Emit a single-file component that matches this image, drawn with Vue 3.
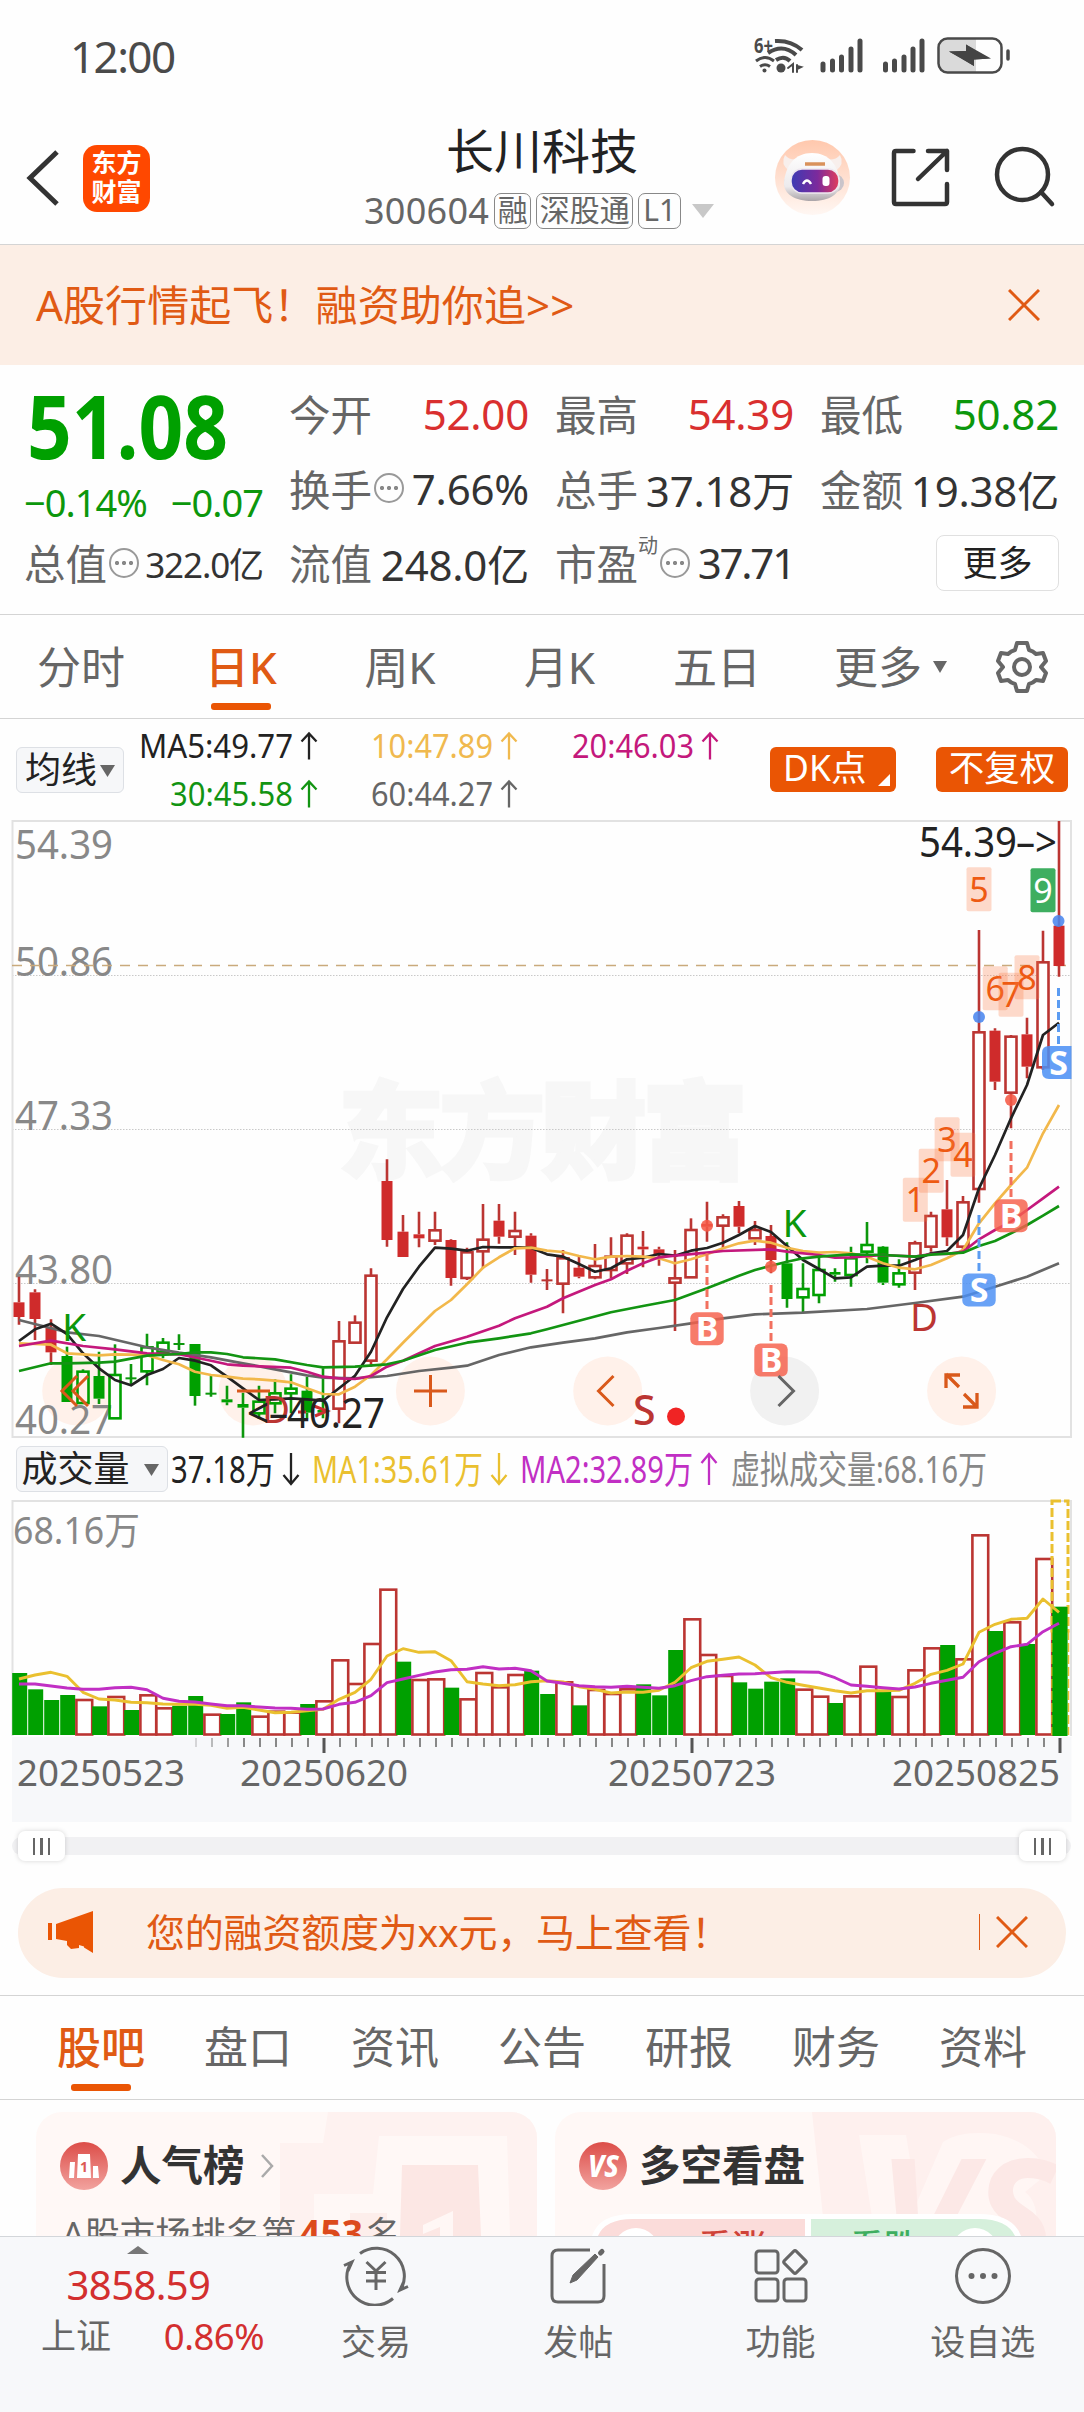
<script setup>
const X0 = 19
const STEP = 16
const cx = (i) => X0 + STEP * i
const ky = (v) => 1120 + v / 3
const vy = (v) => 1490 + v / 3

// kind (upper case = solid body), high, body top, body bottom, low
const candles = [
  ['R', 470, 547, 591, 614], ['R', 508, 517, 597, 660], ['R', 598, 622, 697, 735], ['G', 680, 708, 846, 846],
  ['g', 748, 755, 849, 849], ['G', 695, 768, 836, 852], ['g', 673, 765, 895, 895], ['d', 732, 775, 775, 792],
  ['g', 641, 682, 754, 796], ['g', 654, 668, 697, 715], ['d', 643, 672, 672, 690], ['G', 672, 672, 828, 857],
  ['d', 768, 821, 821, 830], ['G', 797, 838, 847, 856], ['G', 818, 852, 863, 953], ['g', 797, 845, 880, 897],
  ['g', 778, 820, 850, 880], ['g', 763, 806, 820, 880], ['G', 770, 812, 878, 895], ['G', 745, 870, 878, 895],
  ['r', 603, 664, 866, 910], ['r', 586, 608, 668, 668], ['r', 445, 467, 722, 740], ['R', 118, 183, 360, 380],
  ['R', 285, 335, 411, 411], ['R', 275, 343, 355, 382], ['r', 275, 331, 362, 375], ['R', 358, 360, 474, 497],
  ['r', 383, 397, 474, 480], ['r', 252, 359, 394, 445], ['R', 252, 302, 350, 371], ['r', 275, 333, 350, 405],
  ['R', 340, 347, 464, 488], ['c', 447, 481, 481, 510], ['r', 390, 415, 491, 580], ['R', 410, 443, 470, 475],
  ['r', 372, 438, 472, 478], ['r', 352, 410, 450, 475], ['r', 340, 347, 430, 462], ['R', 333, 380, 388, 442],
  ['R', 380, 388, 402, 437], ['r', 390, 475, 488, 633], ['r', 295, 330, 472, 472], ['R', 245, 312, 320, 365],
  ['r', 283, 292, 317, 385], ['R', 243, 258, 320, 340], ['r', 303, 330, 355, 375], ['R', 315, 348, 420, 460],
  ['G', 367, 430, 537, 563], ['g', 430, 507, 532, 577], ['g', 410, 450, 525, 550], ['G', 445, 456, 464, 485],
  ['g', 380, 415, 465, 500], ['g', 306, 375, 395, 430], ['G', 378, 380, 488, 495], ['g', 418, 460, 493, 503],
  ['r', 362, 370, 458, 510], ['r', 275, 288, 380, 395], ['R', 180, 268, 352, 378], ['r', 228, 247, 380, 390],
  ['r', -570, -263, 207, 248], ['R', -275, -268, -115, -90], ['r', -255, -250, -82, 25], ['R', -307, -257, -160, -125],
  ['r', -568, -473, -158, -150], ['R', -897, -583, -462, -430],
].map(([k, h, t, b, l], i) => {
  const red = k === 'R' || k === 'r' || k === 'c'
  return { x: cx(i), solid: k === 'R' || k === 'G', h: ky(h), t: ky(t), b: ky(b), l: ky(l), fill: i < 20 ? 'none' : '#fff', color: red ? (k === 'R' ? '#cf2b2b' : '#bb3532') : '#00a000', wick: red ? '#bb3532' : '#0c970c' }
})

const toPoints = (pairs, fy) => pairs.map(([i, v]) => `${cx(i)},${fy(v).toFixed(1)}`).join(' ')
const seq = (arr) => arr.map((v, i) => [i, v])

const maLines = [
  { color: '#666', p: [[0, 600], [3, 637], [5, 648], [8, 682], [10, 698], [12, 712], [14, 730], [16, 748], [18, 766], [19, 773], [21, 775], [23, 768], [25, 753], [27, 743], [28, 737], [30, 705], [32, 682], [34, 668], [36, 655], [38, 637], [40, 624], [42, 610], [44, 595], [46, 583], [49, 578], [53, 567], [56, 549], [59, 530], [60, 515], [61, 500], [63, 470], [65, 430]] },
  { color: '#222', p: seq([663, 628, 611, 642, 700, 745, 780, 796, 765, 747, 714, 722, 736, 770, 805, 840, 838, 835, 838, 842, 805, 767, 695, 592, 507, 440, 383, 386, 392, 381, 382, 382, 383, 403, 410, 432, 455, 445, 418, 413, 402, 407, 392, 384, 368, 345, 318, 336, 378, 420, 447, 475, 472, 440, 437, 437, 420, 400, 393, 345, 205, 105, -5, -105, -255, -292]) },
  { color: '#f2b84b', p: seq([670, 672, 674, 700, 703, 706, 703, 704, 706, 720, 733, 755, 765, 770, 776, 778, 782, 787, 805, 822, 823, 800, 765, 718, 668, 620, 573, 540, 493, 443, 412, 385, 383, 392, 396, 408, 418, 410, 408, 410, 415, 430, 418, 403, 385, 370, 362, 368, 383, 393, 398, 396, 400, 410, 430, 443, 448, 435, 415, 390, 310, 250, 195, 143, 40, -45]) },
  { color: '#c4187c', p: seq([[0, 678], [2, 662], [4, 678], [6, 688], [8, 700], [10, 703], [12, 722], [13, 733], [14, 737], [17, 743], [18, 755], [19, 770], [20, 775], [21, 777], [22, 768], [23, 740], [24, 722], [26, 678], [28, 650], [30, 617], [31, 595], [33, 560], [34, 535], [36, 495], [37, 478], [38, 452], [39, 430], [40, 412], [41, 407], [43, 398], [44, 393], [47, 388], [48, 395], [50, 405], [51, 413], [52, 412], [54, 405], [56, 410], [57, 402], [58, 402], [59, 395], [60, 358], [61, 330], [62, 305], [63, 270], [64, 235], [65, 200]]).map((e) => e[1]) },
  { color: '#129412', p: [[0, 753], [2, 730], [3, 730], [5, 728], [6, 725], [8, 707], [10, 702], [11, 697], [12, 697], [13, 702], [14, 712], [16, 718], [18, 735], [19, 742], [21, 740], [23, 733], [24, 722], [26, 690], [28, 668], [30, 655], [32, 640], [33, 628], [35, 602], [37, 577], [39, 558], [41, 540], [43, 505], [45, 467], [46, 450], [47, 437], [48, 425], [49, 415], [50, 410], [52, 403], [54, 405], [56, 410], [57, 404], [59, 398], [60, 378], [61, 363], [62, 340], [63, 315], [64, 287], [65, 258]] },
].map((l) => ({ color: l.color, points: toPoints(l.p, ky) }))

const redVol = new Set([4, 6, 8, 9, 12, 15, 16, 17, 19, 20, 21, 22, 23, 25, 26, 28, 29, 30, 31, 34, 36, 37, 38, 42, 43, 44, 49, 50, 52, 53, 55, 56, 57, 59, 60, 62, 64])
const volumes = [552, 601, 633, 618, 630, 652, 621, 663, 616, 655, 650, 621, 674, 675, 640, 680, 665, 668, 645, 634, 511, 582, 462, 299, 518, 570, 568, 596, 628, 549, 592, 555, 545, 615, 577, 649, 600, 612, 598, 586, 619, 483, 388, 495, 558, 580, 599, 578, 568, 599, 620, 642, 619, 530, 607, 621, 541, 475, 468, 508, 136, 426, 397, 465, 207, 353]
  .map((v, i) => ({ x: cx(i), y: vy(v), red: redVol.has(i) }))
const volLines = [
  { color: '#eac02f', p: seq([567, 555, 547, 559, 607, 627, 630, 637, 638, 642, 643, 643, 646, 655, 652, 660, 668, 667, 662, 658, 628, 607, 568, 498, 476, 487, 485, 512, 575, 582, 587, 584, 575, 572, 576, 590, 598, 609, 606, 607, 601, 577, 533, 514, 508, 501, 525, 563, 577, 586, 594, 602, 609, 602, 602, 601, 580, 553, 541, 522, 427, 403, 388, 385, 327, 367]) },
  { color: '#c12fc4', p: seq([582, 582, 588, 594, 598, 598, 593, 592, 599, 625, 634, 636, 642, 647, 647, 651, 654, 655, 658, 657, 643, 637, 617, 578, 567, 556, 546, 539, 538, 530, 537, 535, 542, 573, 580, 587, 590, 592, 589, 592, 595, 587, 572, 560, 556, 552, 551, 548, 545, 546, 547, 563, 585, 589, 593, 597, 591, 580, 571, 562, 515, 490, 470, 463, 425, 400]) },
].map((l) => ({ color: l.color, points: toPoints(l.p, vy) }))

const ticks = Array.from({ length: 55 }, (_, k) => {
  const i = k + 11
  const major = i === 19 || i === 42 || i === 65
  return { x: cx(i) + 1, major, o: k < 3 ? 0.3 + k * 0.25 : 1 }
})

const prices = [
  { y: 859, t: '54.39' }, { y: 975.5, t: '50.86' }, { y: 1130, t: '47.33' }, { y: 1284, t: '43.80' }, { y: 1434, t: '40.27' },
]
const counts = [
  { n: 1, x: 915.3, y: 1199.7 }, { n: 2, x: 931.2, y: 1170.7 }, { n: 3, x: 947.1, y: 1139.3 }, { n: 4, x: 963, y: 1154.7 },
  { n: 5, x: 979, y: 889.3 }, { n: 6, x: 995.2, y: 988.3 }, { n: 7, x: 1011, y: 994.7 }, { n: 8, x: 1027, y: 977.3 }, { n: 9, x: 1043, y: 890.3 },
]
const signals = [
  { t: 'B', x: 707, y: 1328.7, from: 1253, to: 1310, dot: 1225.7 },
  { t: 'B', x: 771, y: 1360, from: 1285, to: 1341, dot: 1266.7 },
  { t: 'B', x: 1011, y: 1215.7, from: 1141, to: 1197, dot: 1100 },
  { t: 'S', x: 979, y: 1290, from: 1215, to: 1271, dot: 1017 },
  { t: 'S', x: 1058.5, y: 1062.7, from: 988, to: 1044, dot: 921 },
]
const maHead = [
  { t: 'MA5:49.77', x: 139, w: 154, y: 757.5, c: '#222' },
  { t: '10:47.89', x: 371, w: 122, y: 757.5, c: '#f0b94e' },
  { t: '20:46.03', x: 572, w: 122, y: 757.5, c: '#c4187c' },
  { t: '30:45.58', x: 170, w: 123, y: 805.5, c: '#129412' },
  { t: '60:44.27', x: 371, w: 122, y: 805.5, c: '#666' },
]
const volHead = [
  { t: '37.18万', x: 171, w: 104, c: '#222', a: 'down' },
  { t: 'MA1:35.61万', x: 312, w: 171, c: '#eac02f', a: 'down' },
  { t: 'MA2:32.89万', x: 520, w: 173, c: '#c12fc4', a: 'up' },
  { t: '虚拟成交量:68.16万', x: 731, w: 256, c: '#888' },
]
const dates = [{ t: '20250523', x: 17 }, { t: '20250620', x: 240 }, { t: '20250723', x: 608 }, { t: '20250825', x: 892 }]
const infoTabs = ['股吧', '盘口', '资讯', '公告', '研报', '财务', '资料']
</script>

<template>
  <div class="page">
    <div class="status">
      <span class="clock">12:00</span>
      <svg width="274" height="48" viewBox="750 30 274 48" fill="none" stroke="#4a4a4a" stroke-linecap="round">
        <text x="754" y="53" font-size="21" font-weight="700" fill="#4a4a4a" stroke="none" textLength="19" lengthAdjust="spacingAndGlyphs">6+</text>
        <g stroke-width="4" stroke-linecap="butt">
          <path d="M775 41Q791 40 802 50M768 53Q783 43 796 55M776 60Q784 55 790 61" />
          <path d="M756 61Q765 54 774 61M760 66.500Q765 63 770 66.500" stroke-width="3" />
        </g>
        <circle cx="764.500" cy="70.500" r="2" fill="#4a4a4a" stroke="none" />
        <circle cx="781" cy="68" r="4.500" fill="#4a4a4a" stroke="none" />
        <path d="M788 68l5-4v8M797 65v7M797 66l4 1-4 2" stroke-width="2" />
        <path d="M823 64v6M832.500 61v9M841.500 57v13M851 49v21M860 41v29M885.500 64v6M894.500 61v9M904 57v13M913 49v21M922 41v29" stroke-width="5" />
        <path d="M949 39h27v33h-27q-10 0-10-10V49q0-10 10-10z" fill="#dadada" stroke="none" />
        <rect x="938.500" y="38.500" width="63" height="34" rx="9" stroke-width="2.500" />
        <path d="M949 51.500l17-.5V44.500L973 49v8L991 58.500 974 59.500v6.500L961 58z" fill="#444" stroke="none" />
        <path d="M966 44.500L991 58.500 974 59.500v6.500L949 51.500l17-.5z" fill="#444" stroke="none" />
        <path d="M1008 51v8" stroke-width="3.500" />
      </svg>
    </div>

    <header class="head">
      <div class="head-left">
        <svg width="34" height="56" viewBox="0 0 34 56"><path d="M32 2L5 28l27 26" fill="none" stroke="#333" stroke-width="5" /></svg>
        <div class="logo"><span>东方</span><span>财富</span></div>
      </div>
      <div class="head-mid">
        <h1>长川科技</h1>
        <div class="code">
          <span class="num">300604</span><i>融</i><i>深股通</i><i class="l1">L1</i>
          <svg width="22" height="14" viewBox="0 0 22 14"><path d="M0 0h22L11 14z" fill="#c8c8c8" /></svg>
        </div>
      </div>
      <svg class="head-right" width="290" height="80" viewBox="770 137 290 80" fill="none">
        <defs>
          <linearGradient id="halo" x2="0" y2="1"><stop stop-color="#ffc8ad" /><stop offset="1" stop-color="#fff7f3" /></linearGradient>
          <linearGradient id="visor"><stop stop-color="#3c3bb4" /><stop offset=".55" stop-color="#7c2a9c" /><stop offset="1" stop-color="#e23c5c" /></linearGradient>
          <linearGradient id="helm" x2="0" y2="1"><stop stop-color="#fff" /><stop offset=".7" stop-color="#eceaec" /><stop offset="1" stop-color="#aaa4a8" /></linearGradient>
        </defs>
        <circle cx="812.500" cy="177.500" r="37.500" fill="url(#halo)" />
        <path d="M785 155q-5 9 4 16l10-12q-9 2-14-4zM840 155q5 9-4 16l-10-12q9 2 14-4z" fill="#f8efec" />
        <rect x="784" y="174" width="60" height="18" rx="9" fill="#c9c4ca" />
        <path d="M812 153c17 0 26 12 28 29 1 12-11 19-28 19s-29-7-28-19c2-17 11-29 28-29z" fill="url(#helm)" />
        <rect x="791" y="169" width="48" height="24" rx="11" fill="url(#visor)" stroke="#eee7ef" stroke-width="1.500" />
        <path d="M803 184q4-7 8 0" stroke="#fff" stroke-width="2.500" />
        <rect x="822.500" y="176" width="7" height="10" rx="3" fill="#fff" />
        <path d="M805 164h20" stroke="#d9925b" stroke-width="3.500" />
        <path d="M913.500 151H896q-2 0-2 2v49q0 2 2 2h49q2 0 2-2v-18M928 151h19v19M947 151l-29 28" stroke="#333" stroke-width="4.500" stroke-linecap="round" stroke-linejoin="round" />
        <circle cx="1022.500" cy="174.500" r="25.500" stroke="#333" stroke-width="4.500" />
        <path d="M1041 192l11 12" stroke="#333" stroke-width="4.500" stroke-linecap="round" />
      </svg>
    </header>

    <div class="promo">
      <span>A股行情起飞！融资助你追&gt;&gt;</span>
      <svg width="32" height="32" viewBox="0 0 32 32"><path d="M1 1l30 30M31 1L1 31" stroke="#e05a14" stroke-width="3" /></svg>
    </div>

    <section class="quote">
      <div class="last">
        <strong>51.08</strong>
        <p><span>−0.14%</span><span>−0.07</span></p>
      </div>
      <div class="cell"><label>今开</label><b class="up">52.00</b></div>
      <div class="cell"><label>最高</label><b class="up">54.39</b></div>
      <div class="cell"><label>最低</label><b class="dn">50.82</b></div>
      <div class="cell"><label>换手</label><em class="dots"></em><b>7.66%</b></div>
      <div class="cell"><label>总手</label><b>37.18万</b></div>
      <div class="cell"><label>金额</label><b>19.38亿</b></div>
      <div class="cell"><label>总值</label><em class="dots"></em><b class="small">322.0亿</b></div>
      <div class="cell"><label>流值</label><b>248.0亿</b></div>
      <div class="cell"><label>市盈</label><sup>动</sup><em class="dots"></em><b class="tight">37.71</b></div>
      <div class="cell end"><button>更多</button></div>
    </section>

    <nav class="periods">
      <span>分时</span><span class="on">日K</span><span>周K</span><span>月K</span><span>五日</span>
      <span class="more">更多<svg width="14" height="12" viewBox="0 0 14 12"><path d="M0 0h14L7 12z" fill="#666" /></svg></span>
      <svg class="gear" width="52" height="54" viewBox="-26 -27 52 54" fill="none" stroke="#666" stroke-width="4" stroke-linejoin="round">
        <path d="M-5-24H5L7-17Q11-16 14-13L21-14 24-6 19 0 24 6 21 14 14 13Q11 16 7 17L5 24H-5L-7 17Q-11 16-14 13L-21 14-24 6-19 0-24-6-21-14-14-13Q-11-16-7-17Z" />
        <circle r="8" />
      </svg>
    </nav>

    <div class="ma-head">
      <div class="pill">均线<svg width="15" height="12" viewBox="0 0 15 12"><path d="M0 0h15L7.500 12z" fill="#666" /></svg></div>
      <svg width="600" height="92" viewBox="136 724 600 92">
        <g v-for="m in maHead" :key="m.t" :fill="m.c">
          <text :x="m.x" :y="m.y" font-size="33" :textLength="m.w" lengthAdjust="spacingAndGlyphs">{{ m.t }}</text>
          <path :d="`M${m.x + m.w + 16} ${m.y + 2}v-26m-7.500 8l7.500-8 7.500 8`" fill="none" :stroke="m.c" stroke-width="2.300" />
        </g>
      </svg>
      <div class="tag dk">DK点<u></u></div>
      <div class="tag fq">不复权</div>
    </div>

    <svg class="chart" width="1084" height="622" viewBox="0 818 1084 622">
      <text x="338" y="1170" font-size="106" font-weight="900" fill="#f7f7f7" stroke="#f7f7f7" stroke-width="3" textLength="410">东方财富</text>
      <g stroke="#c9c9c9" stroke-width="1.200" stroke-dasharray="1.500 1.500"><path d="M12 975.500H1071M12 1129.500H1071M12 1283.500H1071" /></g>
      <rect x="12.500" y="821" width="1058.500" height="616" fill="none" stroke="#e2e2e2" stroke-width="2" />
      <g>
        <circle v-for="x in [76.7, 253, 430.4, 607.7, 961.6]" :key="x" :cx="x" cy="1391" r="34.500" fill="#fff1ea" />
        <circle cx="784.600" cy="1391" r="34.500" fill="#f1f1f1" />
      </g>
      <text v-for="p in prices" :key="p.t" x="15" :y="p.y" font-size="40" fill="#888" textLength="98" lengthAdjust="spacingAndGlyphs">{{ p.t }}</text>
      <path d="M12 965.500H1066" stroke="#c9aa7c" stroke-width="1.300" stroke-dasharray="10 8" />

      <g v-for="c in candles" :key="c.x">
        <path :d="`M${c.x} ${c.h}V${c.t}M${c.x} ${c.b}V${c.l}`" :stroke="c.wick" stroke-width="2.600" />
        <rect v-if="c.solid" :x="c.x - 5.500" :y="c.t" width="11" :height="Math.max(c.b - c.t, 2)" :fill="c.color" />
        <path v-else-if="c.t === c.b" :d="`M${c.x - 5.500} ${c.t}h11`" :stroke="c.wick" stroke-width="2" />
        <rect v-else :x="c.x - 5.500" :y="c.t" width="11" :height="c.b - c.t" :fill="c.fill" :stroke="c.color" stroke-width="2.600" />
      </g>

      <polyline v-for="l in maLines" :key="l.color" :points="l.points" fill="none" :stroke="l.color" stroke-width="2.700" stroke-linejoin="round" />

      <g v-for="s in signals" :key="s.x">
        <path :d="`M${s.x} ${s.from}V${s.to}`" :stroke="s.t === 'B' ? '#f2705f' : '#5b9cf2'" stroke-width="3" stroke-dasharray="8 4" />
        <circle :cx="s.x" :cy="s.dot" r="6" :fill="s.t === 'B' ? '#f55a45' : '#4a86ee'" fill-opacity=".88" />
        <path v-if="s.x > 1050" d="M1049 1046H1071.500V1079H1049Q1042 1079 1042 1072V1053Q1042 1046 1049 1046Z" fill="#4a8ff4" fill-opacity=".86" />
        <rect v-else :x="s.x - 16.700" :y="s.y - 16.500" width="33.400" height="33" rx="6" :fill="s.t === 'B' ? '#f5604c' : '#4a8ff4'" fill-opacity=".83" />
        <text :x="s.x" :y="s.y + 12" font-size="34" font-weight="700" fill="#fff" text-anchor="middle">{{ s.t }}</text>
      </g>

      <g v-for="n in counts" :key="n.n" font-size="34" text-anchor="middle">
        <rect :x="n.x - 12.500" :y="n.y - 22" width="25" height="44" rx="2" :fill="n.n === 9 ? '#3eae60' : '#fb7a46'" :fill-opacity="n.n === 9 ? 1 : 0.28" />
        <text :x="n.x" :y="n.y + 12.500" :fill="n.n === 9 ? '#fff' : '#ee5a12'">{{ n.n }}</text>
      </g>

      <text x="919" y="857" font-size="41" fill="#222" textLength="98" lengthAdjust="spacingAndGlyphs">54.39</text>
      <text x="1016" y="857" font-size="41" fill="#222" textLength="41" lengthAdjust="spacingAndGlyphs">–&gt;</text>
      <g font-size="39">
        <text x="62" y="1340.500" fill="#0c970c">K</text>
        <text x="782.500" y="1236.500" fill="#0c970c">K</text>
        <text x="910" y="1331" fill="#bb3532" textLength="28" lengthAdjust="spacingAndGlyphs">D</text>
        <text x="262" y="1423" fill="#bb3532" textLength="28" lengthAdjust="spacingAndGlyphs">D</text>
        <text x="633" y="1425" font-size="41" font-weight="500" fill="#bb3532">S</text>
      </g>
      <circle cx="676" cy="1416.500" r="9" fill="#f02424" />
      <path d="M298 1412h8M314 1406l13 5-12 5" fill="none" stroke="#cc3030" stroke-width="3" />
      <text x="247" y="1428" font-size="41" fill="#222" textLength="41" lengthAdjust="spacingAndGlyphs">&lt;–</text>
      <text x="287" y="1428" font-size="41" fill="#222" textLength="98" lengthAdjust="spacingAndGlyphs">40.27</text>

      <g fill="none" stroke="#d9591b" stroke-width="3">
        <path d="M77 1376l-15 15 15 15M88 1376l-15 15 15 15M237 1391h33M414 1391h33M430.500 1375v32M613.500 1376l-15 15 15 15" />
        <path d="M959 1387l-13-13M946 1388v-13h14M964 1394l13 13M977 1393v14h-14" stroke-width="3.300" />
        <path d="M778.500 1376l15 15-15 15" stroke="#666" />
      </g>
    </svg>

    <div class="vol-head">
      <div class="pill wide">成交量<svg width="15" height="12" viewBox="0 0 15 12"><path d="M0 0h15L7.500 12z" fill="#666" /></svg></div>
      <svg width="840" height="56" viewBox="168 1442 840 56">
        <g v-for="m in volHead" :key="m.t">
          <text :x="m.x" y="1482.500" font-size="38" :fill="m.c" :textLength="m.w" lengthAdjust="spacingAndGlyphs">{{ m.t }}</text>
          <path v-if="m.a === 'down'" :d="`M${m.x + m.w + 16} 1453v31m-7.500-9l7.500 9 7.500-9`" fill="none" :stroke="m.c" stroke-width="2.300" />
          <path v-if="m.a === 'up'" :d="`M${m.x + m.w + 16} 1485v-31m-7.500 9l7.500-9 7.500 9`" fill="none" :stroke="m.c" stroke-width="2.300" />
        </g>
      </svg>
    </div>

    <svg class="chart" width="1084" height="324" viewBox="0 1498 1084 324">
      <path d="M12.500 1736V1501H1071V1736" fill="none" stroke="#e2e2e2" stroke-width="2" />
      <rect x="12" y="1737" width="1059.500" height="85" fill="#f7f8fa" />
      <text x="13" y="1544" font-size="38" fill="#888" textLength="127" lengthAdjust="spacingAndGlyphs">68.16万</text>
      <template v-for="v in volumes" :key="v.x">
        <rect v-if="v.red" :x="v.x - 6.600" :y="v.y" width="15.800" :height="1734.500 - v.y" fill="#fff" stroke="#bb3532" stroke-width="2.600" />
        <rect v-else :x="v.x - 6.800" :y="v.y - 1" width="15" :height="1736 - v.y" fill="#00a000" />
      </template>
      <rect x="1052" y="1501" width="16" height="130" fill="none" stroke="#eac02f" stroke-width="3" stroke-dasharray="9 3" />
      <path d="M1052 1631v104M1068.500 1631v104" stroke="#eac02f" stroke-width="1.500" stroke-dasharray="9 3" />
      <rect x="1052.500" y="1607" width="15" height="129" fill="#00a000" />
      <polyline v-for="l in volLines" :key="l.color" :points="l.points" fill="none" :stroke="l.color" stroke-width="2.900" stroke-linejoin="round" />
      <path v-for="t in ticks" :key="t.x" :d="`M${t.x} 1738v${t.major ? 15 : 9}`" :stroke="t.major ? '#555' : '#888'" :stroke-width="t.major ? 3 : 2" :opacity="t.o" />
      <text v-for="d in dates" :key="d.t" :x="d.x" y="1786" font-size="37" fill="#666" textLength="168" lengthAdjust="spacingAndGlyphs">{{ d.t }}</text>
    </svg>

    <div class="slider">
      <div class="knob"><i></i><i></i><i></i></div>
      <div class="knob"><i></i><i></i><i></i></div>
    </div>

    <div class="notice">
      <svg width="48" height="42" viewBox="0 0 48 42" fill="#ea5504"><path d="M1 12h4v17H1zM9 13L46 0v42l-9-5.500v-1L32 34v3l-8 1-4-4v-4L9 28z" /></svg>
      <span>您的融资额度为xx元，马上查看！</span>
      <b></b>
      <svg width="32" height="32" viewBox="0 0 32 32"><path d="M1 1l30 30M31 1L1 31" stroke="#e05a14" stroke-width="3" /></svg>
    </div>

    <nav class="info">
      <span v-for="(t, i) in infoTabs" :key="t" :class="{ on: i === 0 }">{{ t }}</span>
    </nav>

    <section class="cards">
      <article class="card">
        <svg class="deco" width="501" height="124" viewBox="0 0 501 124">
          <path d="M292 0H501V124H474L471 24H343L337 82H278V124H244V31H287Z" fill="#fef2f0" />
          <path d="M366 53H442L445 124H364Z" fill="#fce7e4" />
          <path d="M314 101H351V124H314Z" fill="#fdeeeb" />
          <path d="M387 113L417 99V124H404V115L387 122Z" fill="#fff7f5" />
        </svg>
        <div class="card-title">
          <svg width="48" height="48" viewBox="0 0 48 48">
            <defs><linearGradient id="badge" x2="0" y2="1"><stop stop-color="#dc4d48" /><stop offset="1" stop-color="#f2a39f" /></linearGradient></defs>
            <circle cx="24" cy="24" r="24" fill="url(#badge)" />
            <path d="M10 20h5l-1 16H9zM18 12h12l1 24H17zM33 24h5l1 12h-6z" fill="#fff" />
            <text x="20" y="30" font-size="14" font-weight="700" fill="#dc5a55">1</text>
          </svg>
          <h2>人气榜</h2>
          <svg width="14" height="24" viewBox="0 0 14 24"><path d="M2 1l10 11L2 23" fill="none" stroke="#aaa" stroke-width="2.500" /></svg>
        </div>
        <p class="rank">A股市场排名第<b>453</b>名</p>
      </article>
      <article class="card">
        <svg class="deco" width="501" height="124" viewBox="0 0 501 124">
          <path d="M257 0H501V124H270Z" fill="#fef0ee" />
          <path d="M304 23H351L362 90 388 30Q405 18 440 22 480 30 492 62L470 80Q486 92 480 124H320Z" fill="#fff6f4" />
          <text x="322" y="160" font-size="158" font-weight="700" font-style="italic" fill="#fce8e6" textLength="180" lengthAdjust="spacingAndGlyphs">VS</text>
          <path d="M37 124Q44 102 78 102H424Q458 102 466 124Z" fill="#fff" />
          <path d="M43 124Q50 107 78 107H250V124Z" fill="#fbdcda" />
          <path d="M256 107H424Q452 107 460 124H256Z" fill="#d6f0dc" />
          <circle cx="81" cy="139" r="23" fill="#fff" /><circle cx="420" cy="139" r="23" fill="#fff" />
          <text x="143" y="147" font-size="34" font-weight="500" fill="#cf4338">看涨</text>
          <text x="295" y="147" font-size="34" font-weight="500" fill="#3eae60">看跌</text>
        </svg>
        <div class="card-title">
          <svg width="48" height="48" viewBox="0 0 48 48">
            <circle cx="24" cy="24" r="24" fill="url(#badge)" />
            <text x="9" y="35" font-size="30" font-weight="800" font-style="italic" fill="#fff" textLength="31" lengthAdjust="spacingAndGlyphs">VS</text>
          </svg>
          <h2>多空看盘</h2>
        </div>
      </article>
    </section>

    <footer class="bottom">
      <div class="index">
        <svg width="22" height="8" viewBox="0 0 22 8"><path d="M0 8L11 0l11 8z" fill="#777" /></svg>
        <strong>3858.59</strong>
        <p><span>上证</span><b>0.86%</b></p>
      </div>
      <div class="item">
        <svg width="66" height="60" viewBox="-33 -30 66 60" fill="none" stroke="#666" stroke-width="3">
          <path d="M-16-22.500A28 28 0 0 1 25 13.500M17 22.500A28 28 0 0 1-25-13.500M-32-10.500L-24-14-28-5M32 10.500L24 14 28 5" />
          <path d="M-9.500-14L0-5 9.500-14M0-5V14M-10-3.500H10M-10 5H10" />
        </svg>
        <span>交易</span>
      </div>
      <div class="item">
        <svg width="66" height="60" viewBox="-33 -30 66 60" fill="none" stroke="#666" stroke-width="3">
          <path d="M12-26H-20Q-26-26-26-20V20Q-26 26-20 26H20Q26 26 26 20V-12" />
          <path d="M-8 7L-5-1 17-22 20-19-1 4Z" fill="#666" stroke-width="1" /><path d="M22.500-23L24-24.500" stroke-width="5" stroke-linecap="round" />
        </svg>
        <span>发帖</span>
      </div>
      <div class="item">
        <svg width="66" height="60" viewBox="-33 -30 66 60" fill="none" stroke="#666" stroke-width="3">
          <rect x="-25" y="-25" width="22" height="22" rx="3" /><rect x="-25" y="3" width="22" height="22" rx="3" /><rect x="3" y="3" width="22" height="22" rx="3" />
          <rect x="5.500" y="-22.500" width="17" height="17" rx="2" transform="rotate(45 14 -14)" />
        </svg>
        <span>功能</span>
      </div>
      <div class="item">
        <svg width="66" height="60" viewBox="-33 -30 66 60" fill="none" stroke="#666" stroke-width="3">
          <circle r="26.500" /><g fill="#666" stroke="none"><circle cx="-11.500" r="3" /><circle r="3" /><circle cx="11.500" r="3" /></g>
        </svg>
        <span>设自选</span>
      </div>
    </footer>
  </div>
</template>

<style>
body { margin: 0; background: #fff; }
</style>

<style scoped>
* { box-sizing: border-box; margin: 0; padding: 0; }
.page { width: 1084px; height: 2412px; overflow: hidden; display: flex; flex-direction: column; background: #fefefe; font-family: "Noto Sans", "Noto Sans CJK SC", sans-serif; color: #333; white-space: nowrap; }
.page > * { flex-shrink: 0; }
svg { display: block; flex-shrink: 0; }
.status { height: 112px; padding: 30px 60px 0 70px; display: flex; justify-content: space-between; align-items: flex-start; }
.clock { font-size: 44px; line-height: 52px; color: #4a4a4a; letter-spacing: -1.600px; }
.head { height: 133px; border-bottom: 1px solid #d4d4d4; display: grid; grid-template-columns: 360px 364px 1fr; }
.head-left { display: flex; align-items: center; padding-left: 25px; gap: 24px; }
.logo { width: 67px; height: 67px; border-radius: 14px; background: #ff4800; color: #fff; display: flex; flex-direction: column; align-items: center; justify-content: center; font-size: 25px; line-height: 29px; font-weight: 700; padding-bottom: 2px; }
.head-mid { display: flex; flex-direction: column; align-items: center; padding-top: 8px; }
.head-mid h1 { font-size: 48px; line-height: 62px; font-weight: 400; color: #222; }
.code { display: flex; align-items: center; gap: 5px; font-size: 36px; color: #666; height: 36px; margin: 11px 6px 0 0; }
.code .num { letter-spacing: 0.3px; line-height: 36px; }
.code i { font-style: normal; font-size: 30px; line-height: 31px; height: 36px; border: 1.5px solid #888; border-radius: 7px; padding: 0 2.500px; }
.code .l1 { padding: 0 4px; }
.code svg { margin-left: 6px; }
.head-right { margin: 25px 0 0 46px; }
.promo { height: 120px; background: #fceee5; color: #e05a14; font-size: 42px; letter-spacing: .1px; display: flex; justify-content: space-between; align-items: center; padding: 0 44px 0 36px; }
.promo span { margin-top: -5px; }
.quote { height: 250px; border-bottom: 1px solid #d4d4d4; padding: 12px 25px 0 24px; display: grid; grid-template-columns: 239px 240px 239px 239px; grid-template-rows: repeat(3, 74.500px); column-gap: 26px; }
.last { grid-row: span 2; color: #00a000; }
.last strong { display: block; font-size: 87px; line-height: 100px; font-weight: 700; transform: scaleX(.9); transform-origin: 0 0; margin: -2px 0 0 3px; }
.last p { display: flex; justify-content: space-between; font-size: 38px; line-height: 46px; margin-top: 4px; color: #0c970c; letter-spacing: -1px; }
.cell { display: flex; align-items: center; font-size: 41.500px; color: #666; position: relative; }
.cell label { margin-top: -2px; }
.cell b { font-weight: 400; color: #333; margin-left: auto; font-size: 42px; letter-spacing: -0.200px; margin-top: -1px; }
.cell .small { font-size: 35px; letter-spacing: -1.100px; }
.cell .up { color: #d92f2f; }
.cell .dn { color: #0c970c; }
.cell .tight { letter-spacing: -2.200px; }
.cell sup { font-size: 20px; align-self: flex-start; line-height: 20px; margin-top: 10px; }
.dots { width: 30px; height: 30px; margin: -1px 0 0 2px; border: 2px solid #999; border-radius: 50%; background: radial-gradient(circle, #888 1.800px, transparent 2.400px) -7px 0, radial-gradient(circle, #888 1.800px, transparent 2.400px) 0 0, radial-gradient(circle, #888 1.800px, transparent 2.400px) 7px 0; background-repeat: no-repeat; }
.end { justify-content: flex-end; }
button { width: 123px; height: 56px; border: 1.500px solid #e0e0e0; border-radius: 8px; background: #fff; color: #222; font: 35px/48px "Noto Sans", "Noto Sans CJK SC", sans-serif; }
.periods { height: 104px; border-bottom: 1px solid #d4d4d4; display: grid; align-items: center; grid-template-columns: 162px 158px 160px 159px 156px 199px 52px; font-size: 44px; color: #666; }
.periods span { position: relative; line-height: 60px; justify-self: center; }
.periods .more { display: flex; align-items: center; gap: 11px; justify-self: end; margin-right: 47px; }
.on { color: #e05a14; font-weight: 500; position: relative; }
.on::after { content: ""; position: absolute; left: 50%; margin-left: -30px; width: 60px; height: 7px; border-radius: 3px; background: #ea5504; bottom: -13px; }
.gear { margin-left: 2px; }
.ma-head { height: 99px; display: flex; padding: 5px 16px 0; }
.pill { width: 108px; height: 46px; margin-top: 23px; border: 1.500px solid #dde0e5; border-radius: 6px; background: #f6f7f9; font-size: 36px; line-height: 40px; color: #222; display: flex; align-items: center; justify-content: center; gap: 3px; }
.pill svg { margin-top: 2px; }
.ma-head .pill { margin-right: 12px; }
.tag { height: 45px; margin-top: 23px; border-radius: 6px; background: #ea5504; color: #fff; font-size: 35.500px; line-height: 41px; text-align: center; }
.dk { width: 126px; margin-left: 34px; text-align: left; padding-left: 13px; position: relative; }
.dk u { position: absolute; right: 6px; bottom: 6px; border: 6px solid transparent; border-right-color: #fff; border-bottom-color: #fff; }
.fq { width: 132px; margin-left: 40px; }
.vol-head { height: 58px; display: flex; padding: 2px 16px 0; }
.vol-head .pill { width: 152px; margin-top: 4px; gap: 14px; padding-right: 4px; }
.slider { margin: 15px 13px 0 12px; height: 18px; border-radius: 9px; background: #f1f1f3; display: flex; justify-content: space-between; align-items: center; padding: 0 5px 0 6px; }
.knob { width: 47px; height: 30px; border-radius: 7px; background: #fff; box-shadow: 0 0 5px rgba(0, 0, 0, .16); display: flex; gap: 5px; align-items: center; justify-content: center; }
.knob i { width: 2.500px; height: 17px; background: #666; }
.notice { margin: 33px 18px 0; height: 90px; border-radius: 45px; background: #fceee5; display: flex; align-items: center; padding: 0 38px 2px 29px; color: #e05a14; font-size: 39px; }
.notice span { margin: -4px 0 0 51px; flex: 1; letter-spacing: -0.200px; }
.notice b { width: 1.500px; height: 36px; background: #e05a14; margin-right: 16px; }
.info { margin-top: 17px; height: 105px; border-top: 1px solid #d4d4d4; border-bottom: 1px solid #d4d4d4; display: flex; justify-content: space-between; align-items: center; padding: 0 57px; font-size: 44px; color: #666; }
.info span { line-height: 60px; margin-top: -1px; }
.info .on::after { bottom: -14px; }
.cards { height: 136px; padding: 12px 28px 0 36px; display: flex; gap: 18px; overflow: hidden; }
.card { position: relative; width: 501px; height: 190px; border-radius: 26px; background: #fff8f6; overflow: hidden; flex-shrink: 0; }
.deco { position: absolute; left: 0; top: 0; }
.card-title { position: relative; display: flex; align-items: center; height: 48px; margin: 30px 0 0 24px; }
.card-title h2 { font-size: 41.500px; line-height: 48px; font-weight: 700; color: #333; margin: -3px 15px 0 12px; }
.rank { position: relative; margin: 18px 0 0 26px; font-size: 35.300px; line-height: 50px; color: #666; }
.rank b { color: #dc4a1c; margin: 0 3px; font-size: 37px; }
.bottom { height: 176px; background: #f7f8fa; border-top: 1px solid #d3d6da; display: flex; color: #666; font-size: 35px; }
.index { width: 275px; display: flex; flex-direction: column; align-items: center; padding-top: 9px; color: #d32f2f; }
.index strong { font-weight: 400; font-size: 40px; line-height: 48px; margin: 7px 0 0 2px; letter-spacing: -0.600px; }
.index p { width: 275px; display: flex; justify-content: space-between; line-height: 46px; padding: 0 11px 0 41px; margin-top: 4px; }
.index span { color: #666; }
.index b { font-weight: 400; font-size: 36.500px; letter-spacing: -0.500px; }
.item { width: 202.250px; display: flex; flex-direction: column; align-items: center; padding-top: 9px; line-height: 50px; }
.item span { margin-top: 11px; }
</style>
